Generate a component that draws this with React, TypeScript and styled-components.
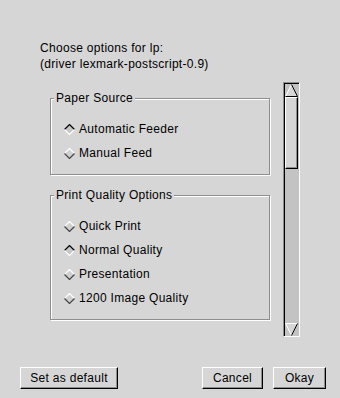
import React from "react";
import styled, { createGlobalStyle } from "styled-components";

const BG = "#d6d6d6";
const DARK = "#8e8e8e";
const TROUGH = "#c3c3c3";

const Global = createGlobalStyle`
  html, body { margin: 0; padding: 0; background: ${BG}; }
  body { font-family: "Liberation Sans", Arial, sans-serif; font-size: 12px; color: #000; letter-spacing: 0.3px; }
`;

const Window = styled.div`
  width: 340px;
  height: 398px;
  background: ${BG};
  display: flex;
  flex-direction: column;
  box-sizing: border-box;
  padding-top: 40px;
  overflow: hidden;
`;

const Header = styled.div`
  margin-left: 40px;
  line-height: 16px;
  white-space: nowrap;
`;

const ScrollArea = styled.div`
  margin: 10px 40px 0 40px;
  height: 255px;
  display: flex;
`;

const Viewport = styled.div`
  flex: 1;
  padding: 16px 13px 0 10px;
  display: flex;
  flex-direction: column;
  gap: 20px;
`;

const Frame = styled.div`
  position: relative;
  border: 1px solid ${DARK};
  box-shadow: inset 1px 1px 0 #fff, 1px 1px 0 #fff;
  padding: 18px 0 9px 0;
  display: flex;
  flex-direction: column;
`;

const Legend = styled.span`
  position: absolute;
  top: -8px;
  left: 3px;
  padding: 0 2px;
  background: ${BG};
  line-height: 14px;
  white-space: nowrap;
`;

const Row = styled.div`
  height: 24px;
  display: flex;
  align-items: center;
  gap: 4px;
  padding-left: 13px;
  white-space: nowrap;
`;

const Diamond = ({ on }: { on: boolean }) => (
  <svg width="11" height="11" viewBox="0 0 11 11" style={{ flex: "none" }}>
    <polygon points="5.5,0.5 10.5,5.5 5.5,10.5 0.5,5.5" fill={on ? "#c6c6c6" : "#d0d0d0"} />
    <polyline
      points="0.5,5.5 5.5,0.5 10.5,5.5"
      fill="none"
      stroke={on ? "#000" : "#fff"}
      strokeWidth="1.2"
    />
    <polyline
      points="0.5,5.5 5.5,10.5 10.5,5.5"
      fill="none"
      stroke={on ? "#fff" : "#444"}
      strokeWidth="1.2"
    />
  </svg>
);

const Scrollbar = styled.div`
  width: 17px;
  box-sizing: border-box;
  border-style: solid;
  border-width: 1px;
  border-color: ${DARK} #fff #fff ${DARK};
  box-shadow: inset 1px 1px 0 #000;
  background: ${TROUGH};
  padding: 1px 1px 0 1px;
  display: flex;
  flex-direction: column;
`;

const Step = styled.div`
  width: 13px;
  height: 13px;
  flex: none;
  display: block;
`;

const Thumb = styled.div`
  width: 13px;
  height: 72px;
  box-sizing: border-box;
  background: ${BG};
  border-style: solid;
  border-width: 1px;
  border-color: #fff #000 #000 #fff;
  box-shadow: inset -1px -1px 0 ${DARK};
  flex: none;
`;

const Trough = styled.div`
  flex: 1;
`;

const UpArrow = () => (
  <Step>
    <svg width="13" height="13" viewBox="0 0 13 13">
      <polygon points="6.5,0.5 12.5,12.5 0.5,12.5" fill={BG} />
      <line x1="0.5" y1="12.5" x2="6.5" y2="0.5" stroke="#fff" />
      <line x1="6.5" y1="0.5" x2="12.5" y2="12.5" stroke="#000" />
      <line x1="0.5" y1="12.5" x2="12.5" y2="12.5" stroke="#000" />
    </svg>
  </Step>
);

const DownArrow = () => (
  <Step>
    <svg width="13" height="13" viewBox="0 0 13 13">
      <polygon points="0.5,0.5 12.5,0.5 6.5,12.5" fill={BG} />
      <line x1="0.5" y1="0.5" x2="12.5" y2="0.5" stroke="#fff" />
      <line x1="0.5" y1="0.5" x2="6.5" y2="12.5" stroke="#fff" />
      <line x1="12.5" y1="0.5" x2="6.5" y2="12.5" stroke="#000" />
    </svg>
  </Step>
);

const ButtonBar = styled.div`
  margin-top: 30px;
  padding: 0 14px 0 20px;
  display: flex;
  justify-content: space-between;
`;

const Group = styled.div`
  display: flex;
  gap: 10px;
`;

const Button = styled.button<{ $w: number }>`
  width: ${(p) => p.$w}px;
  height: 22px;
  box-sizing: border-box;
  padding: 0;
  font-family: "Liberation Sans", Arial, sans-serif;
  font-size: 12px;
  letter-spacing: 0.3px;
  color: #000;
  background: ${BG};
  border-style: solid;
  border-width: 1px;
  border-color: #fff #000 #000 #fff;
  box-shadow: inset -1px -1px 0 ${DARK};
  border-radius: 0;
  white-space: nowrap;
`;

type Group_ = { title: string; options: string[]; selected: number };

const groups: Group_[] = [
  { title: "Paper Source", options: ["Automatic Feeder", "Manual Feed"], selected: 0 },
  {
    title: "Print Quality Options",
    options: ["Quick Print", "Normal Quality", "Presentation", "1200 Image Quality"],
    selected: 1,
  },
];

export default function App() {
  return (
    <Window>
      <Global />
      <Header>
        Choose options for lp:
        <br />
        (driver lexmark-postscript-0.9)
      </Header>
      <ScrollArea>
        <Viewport>
          {groups.map((g) => (
            <Frame key={g.title}>
              <Legend>{g.title}</Legend>
              {g.options.map((o, i) => (
                <Row key={o}>
                  <Diamond on={i === g.selected} />
                  {o}
                </Row>
              ))}
            </Frame>
          ))}
        </Viewport>
        <Scrollbar>
          <UpArrow />
          <Thumb />
          <Trough />
          <DownArrow />
        </Scrollbar>
      </ScrollArea>
      <ButtonBar>
        <Button $w={98}>Set as default</Button>
        <Group>
          <Button $w={61}>Cancel</Button>
          <Button $w={53}>Okay</Button>
        </Group>
      </ButtonBar>
    </Window>
  );
}
